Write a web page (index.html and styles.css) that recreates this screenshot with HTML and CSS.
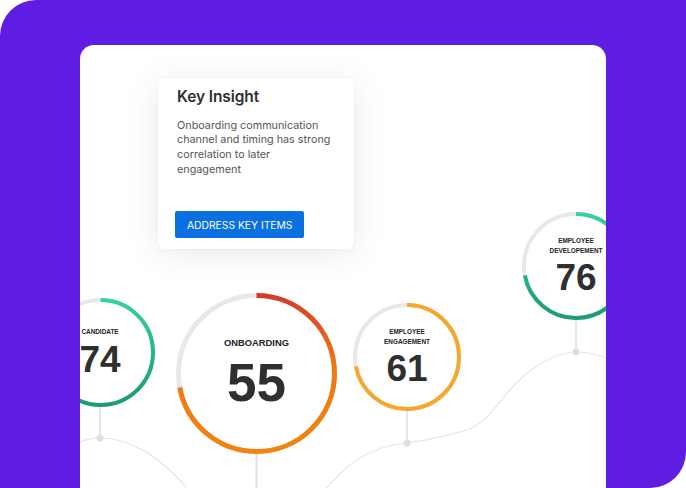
FILE: index.html
```html
<!DOCTYPE html>
<html lang="en">
<head>
<meta charset="utf-8">
<title>Key Insight</title>
<link rel="stylesheet" href="styles.css">
</head>
<body>
<div class="frame">
  <div class="panel">
    <svg class="links" viewBox="0 0 526 443" width="526" height="443" aria-hidden="true">
      <path class="curve" d="M -6 399 C 4 395 12 393 20 393 C 50 393 82 412 110 447"/>
      <path class="curve" d="M 245 445 C 265 420 290 401 327 398 C 350 395 368 390 387 385 C 410 378 425 345 445 330 C 460 318 478 307 496 307 C 510 307 520 310 532 315"/>
      <line class="stem" x1="20" y1="362" x2="20" y2="393"/>
      <line class="stem stem-main" x1="176.5" y1="407" x2="176.5" y2="445"/>
      <line class="stem" x1="327" y1="366" x2="327" y2="398"/>
      <line class="stem" x1="496" y1="275" x2="496" y2="307"/>
      <circle class="dot" cx="20" cy="393" r="3.5"/>
      <circle class="dot" cx="327" cy="398" r="3.5"/>
      <circle class="dot" cx="496" cy="307" r="3.5"/>
    </svg>

    <div class="card">
      <h2 class="card-title">Key Insight</h2>
      <p class="card-text">Onboarding communication<br>channel and timing has strong<br>correlation to later<br>engagement</p>
      <button class="card-btn" type="button">ADDRESS KEY ITEMS</button>
    </div>

    <div class="node node-candidate">
      <svg class="ring" viewBox="0 0 109 109" width="109" height="109">
        <defs>
          <linearGradient id="gCand" x1="1" y1="0" x2="0" y2="0">
            <stop offset="0" stop-color="#33d29f"/>
            <stop offset="1" stop-color="#1c9a76"/>
          </linearGradient>
        </defs>
        <circle class="track" cx="54.5" cy="54.5" r="52.5" stroke-width="4"/>
        <circle cx="54.5" cy="54.5" r="52.5" fill="none" stroke="url(#gCand)" stroke-width="4" stroke-dasharray="237.5 400" transform="rotate(-90 54.5 54.5)"/>
      </svg>
      <div class="node-text">
        <span class="node-label">CANDIDATE</span>
        <span class="node-value">74</span>
      </div>
    </div>

    <div class="node node-onboarding">
      <svg class="ring" viewBox="0 0 161 161" width="161" height="161">
        <defs>
          <linearGradient id="gOnb" x1="1" y1="0" x2="0" y2="0">
            <stop offset="0" stop-color="#d8382b"/>
            <stop offset="0.42" stop-color="#ee7615"/>
            <stop offset="1" stop-color="#f1840f"/>
          </linearGradient>
        </defs>
        <circle class="track" cx="80.5" cy="80.5" r="78" stroke-width="5"/>
        <circle cx="80.5" cy="80.5" r="78" fill="none" stroke="url(#gOnb)" stroke-width="5" stroke-dasharray="352.9 600" transform="rotate(-90 80.5 80.5)"/>
      </svg>
      <div class="node-text">
        <span class="node-label node-label-lg">ONBOARDING</span>
        <span class="node-value node-value-lg">55</span>
      </div>
    </div>

    <div class="node node-engagement">
      <svg class="ring" viewBox="0 0 108 108" width="108" height="108">
        <circle class="track" cx="54" cy="54" r="52" stroke-width="4"/>
        <circle cx="54" cy="54" r="52" fill="none" stroke="#f4a82d" stroke-width="4" stroke-dasharray="235.2 400" transform="rotate(-90 54 54)"/>
      </svg>
      <div class="node-text">
        <span class="node-label">EMPLOYEE<br>ENGAGEMENT</span>
        <span class="node-value">61</span>
      </div>
    </div>

    <div class="node node-development">
      <svg class="ring" viewBox="0 0 108 108" width="108" height="108">
        <defs>
          <linearGradient id="gDev" x1="1" y1="0" x2="0" y2="0">
            <stop offset="0" stop-color="#33d29f"/>
            <stop offset="1" stop-color="#1c9c78"/>
          </linearGradient>
        </defs>
        <circle class="track" cx="54" cy="54" r="52" stroke-width="4"/>
        <circle cx="54" cy="54" r="52" fill="none" stroke="url(#gDev)" stroke-width="4" stroke-dasharray="235.2 400" transform="rotate(-90 54 54)"/>
      </svg>
      <div class="node-text">
        <span class="node-label">EMPLOYEE<br>DEVELOPEMENT</span>
        <span class="node-value">76</span>
      </div>
    </div>
  </div>
</div>
</body>
</html>
```

FILE: styles.css
```css
* { box-sizing: border-box; }

html, body {
  margin: 0;
  padding: 0;
  background: #ffffff;
}

body {
  width: 686px;
  height: 488px;
  overflow: hidden;
  font-family: Inter, "Liberation Sans", Arial, sans-serif;
}

.frame {
  width: 686px;
  height: 488px;
  background: #5f1de3;
  border-radius: 36px 0 36px 0;
  overflow: hidden;
  padding: 45px 80px 0 80px;
}

.panel {
  position: relative;
  width: 526px;
  height: 470px;
  background: #ffffff;
  border-radius: 14px 14px 0 0;
  overflow: hidden;
  padding: 33px 0 0 78px;
}

.links {
  position: absolute;
  left: 0;
  top: 0;
}

.curve {
  fill: none;
  stroke: #e6e6e6;
  stroke-width: 1.2;
}

.stem {
  stroke: #dcdcdc;
  stroke-width: 1.5;
}

.stem-main {
  stroke: #e3e3e3;
  stroke-width: 2.2;
}

.dot {
  fill: #dedede;
}

.card {
  position: relative;
  z-index: 1;
  width: 196px;
  height: 171px;
  background: #ffffff;
  border-radius: 7px;
  box-shadow: 0 4px 36px rgba(0, 0, 0, 0.09), 0 1px 6px rgba(0, 0, 0, 0.03);
  padding: 9px 18px 11px 19px;
  display: flex;
  flex-direction: column;
  align-items: flex-start;
}

.card-title {
  margin: 0;
  font-size: 15.5px;
  line-height: 20px;
  font-weight: 600;
  color: #2f2f2f;
  letter-spacing: -0.1px;
}

.card-text {
  margin: 11.5px 0 0 0;
  font-size: 10.8px;
  line-height: 14.8px;
  color: #555555;
}

.card-btn {
  margin: auto 0 0 -2px;
  height: 27px;
  padding: 0 12px;
  border: 0;
  border-radius: 2px;
  background: #0a6fe1;
  color: #ffffff;
  font-family: Inter, "Liberation Sans", Arial, sans-serif;
  font-size: 10.3px;
  font-weight: 400;
  letter-spacing: 0;
}

.node {
  position: absolute;
  display: grid;
}

.node > * {
  grid-area: 1 / 1;
}

.node-candidate { left: -34.5px; top: 253px; width: 109px; height: 109px; }
.node-onboarding { left: 96px; top: 247.5px; width: 161px; height: 161px; }
.node-engagement { left: 273px; top: 258px; width: 108px; height: 108px; }
.node-development { left: 442px; top: 167px; width: 108px; height: 108px; }

.ring {
  display: block;
}

.track {
  fill: none;
  stroke: #e8e8e8;
}

.node-text {
  display: flex;
  flex-direction: column;
  align-items: center;
  justify-content: center;
  text-align: center;
  font-family: "Liberation Sans", Arial, sans-serif;
  font-weight: 700;
}

.node-label {
  font-size: 6.4px;
  line-height: 10px;
  color: #222222;
}

.node-label-lg {
  font-size: 9.4px;
  line-height: 12px;
}

.node-value {
  margin-top: 3.6px;
  font-size: 37px;
  line-height: 37px;
  color: #2f2f2f;
}

.node-value-lg {
  margin-top: 6.5px;
  font-size: 53px;
  line-height: 53px;
}
```
